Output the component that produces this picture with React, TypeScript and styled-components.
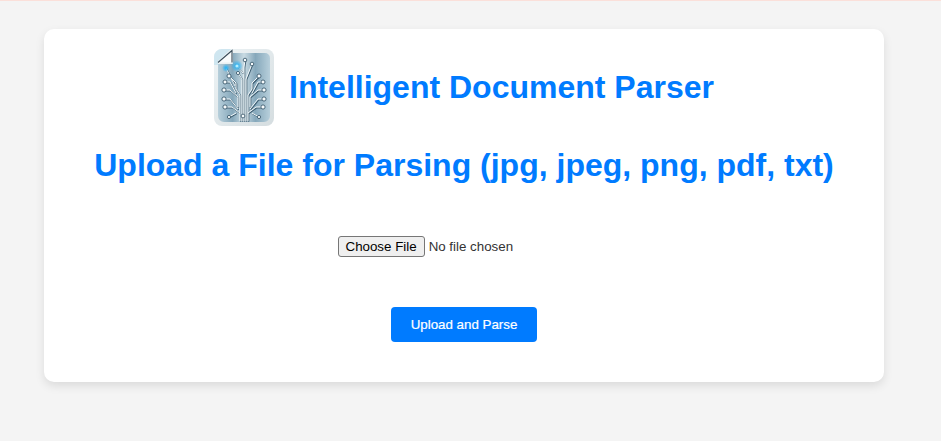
import React from "react";
import styled, { createGlobalStyle } from "styled-components";

const Global = createGlobalStyle`
  html, body { margin: 0; padding: 0; background: #f4f4f4; }
  body { font-family: "Liberation Sans", Arial, sans-serif; }
`;

const Page = styled.div`
  width: 941px;
  height: 441px;
  box-sizing: border-box;
  overflow: hidden;
  border-top: 1px solid #fbe0da;
  padding: 28px 57px 0 44px;
`;

const Card = styled.main`
  width: 840px;
  height: 353px;
  box-sizing: border-box;
  padding-top: 20px;
  background: #fff;
  border-radius: 10px;
  box-shadow: 0 4px 10px rgba(0, 0, 0, 0.1);
  text-align: center;
`;

const Header = styled.header`
  display: flex;
  justify-content: center;
  align-items: center;
  gap: 15px;
  height: 77px;
`;

const Title = styled.h1`
  margin: 0;
  font-size: 32px;
  font-weight: 700;
  line-height: 37px;
  color: #007bff;
`;

const Subtitle = styled.h2`
  margin: 21px 0 0;
  font-size: 32px;
  font-weight: 700;
  line-height: 37px;
  color: #007bff;
`;

const Form = styled.form`
  display: flex;
  flex-direction: column;
  align-items: center;
  margin-top: 52px;
`;

const FileInput = styled.input`
  width: 253px;
  height: 21px;
  font-family: "Liberation Sans", Arial, sans-serif;
  font-size: 13.333px;
  color: #333;

  &::file-selector-button {
    font-family: "Liberation Sans", Arial, sans-serif;
    font-size: 13.333px;
    color: #000;
    background: #efefef;
    border: 1px solid #767676;
    border-radius: 3px;
    padding: 1px 7px;
    margin-right: 4px;
    height: 21px;
  }
`;

const Submit = styled.button`
  margin-top: 50px;
  width: 146px;
  height: 35px;
  padding: 0;
  border: 0;
  border-radius: 4px;
  background: #007bff;
  color: #fff;
  font-family: "Liberation Sans", Arial, sans-serif;
  font-size: 13.333px;
  font-weight: 400;
  -webkit-text-stroke: 0.2px #fff;
`;

const traces = [
  "M26 72V46L22 40V34L15 27",
  "M34 72V46L38 40V34L45 27",
  "M28 72V30L24 24",
  "M30 72V18L31 11",
  "M32 72V30L38 15",
  "M24 58V48L16 41H10",
  "M36 58V48L44 41H50",
  "M22 44L16 33H11",
  "M38 44L44 33H49",
  "M24 60L16 50H10",
  "M36 60L44 50H50",
  "M26 64L18 58H11",
  "M34 64L42 58H49",
  "M29 24L23 17",
  "M21 37L12 19",
  "M22 64L15 68",
  "M38 64L45 68",
];

const nodes: [number, number, number][] = [
  [31, 11, 1.8], [38, 15, 1.8], [15, 27, 2], [45, 27, 2], [11, 33, 2], [49, 33, 2],
  [10, 41, 2.1], [50, 41, 2.1], [10, 50, 2.1], [50, 50, 2.1], [11, 58, 2.1], [49, 58, 2.1],
  [29, 67, 1.9], [15, 68, 1.6], [45, 68, 1.6], [24, 24, 1.6],
];

const Logo = () => (
  <svg width="60" height="77" viewBox="0 0 60 77" aria-label="Intelligent Document Parser logo">
    <defs>
      <linearGradient id="sheet" x1="0" y1="0" x2="1" y2="1">
        <stop offset="0" stopColor="#eef4f6" />
        <stop offset="1" stopColor="#d5dde0" />
      </linearGradient>
      <linearGradient id="inner" x1="0" y1="0" x2="1" y2="0">
        <stop offset="0" stopColor="#b7cfdb" />
        <stop offset="0.28" stopColor="#86a8bb" />
        <stop offset="0.5" stopColor="#c9dbe3" />
        <stop offset="0.72" stopColor="#86a8bb" />
        <stop offset="1" stopColor="#b7cfdb" />
      </linearGradient>
      <radialGradient id="glow">
        <stop offset="0" stopColor="#19b2fb" />
        <stop offset="1" stopColor="#19b2fb" stopOpacity="0" />
      </radialGradient>
      <filter id="soft" x="-10%" y="-10%" width="120%" height="120%">
        <feGaussianBlur stdDeviation="0.4" />
      </filter>
    </defs>
    <path d="M8 0H52a8 8 0 0 1 8 8V69a8 8 0 0 1-8 8H8a8 8 0 0 1-8-8V8a8 8 0 0 1 8-8Z" fill="url(#sheet)" />
    <g filter="url(#soft)">
      <path d="M19 4H51a5 5 0 0 1 5 5V67a6 6 0 0 1-6 6H10a6 6 0 0 1-6-6V15H19Z" fill="url(#inner)" />
      <path d="M0 8a8 8 0 0 1 8-8H17L4 12V16H0Z" fill="#cfe6f0" />
      <path d="M4 13.5L18 1.5V13.5Z" fill="#f8fbfc" />
      <path d="M4 13.5L18 1.5V13.5" fill="none" stroke="#3a4d5a" strokeWidth="1.1" />
      <g fill="none" stroke="#355468" strokeWidth="1.3" opacity="0.85" transform="translate(0.7 0.8)">
        {traces.map((d) => <path key={d} d={d} />)}
      </g>
      <g fill="none" stroke="#f2f8fa" strokeWidth="1">
        {traces.map((d) => <path key={d} d={d} />)}
      </g>
      {nodes.map(([cx, cy, r]) => (
        <circle key={`${cx}-${cy}`} cx={cx} cy={cy} r={r} fill="#f7fbfc" stroke="#2f4e62" strokeWidth="0.8" />
      ))}
      <circle cx="23" cy="17" r="6" fill="url(#glow)" />
      <circle cx="23" cy="17" r="1.6" fill="#b6efff" />
      <circle cx="12" cy="19" r="4" fill="url(#glow)" />
    </g>
  </svg>
);

export default function App() {
  return (
    <>
      <Global />
      <Page>
        <Card>
          <Header>
            <Logo />
            <Title>Intelligent Document Parser</Title>
          </Header>
          <Subtitle>Upload a File for Parsing (jpg, jpeg, png, pdf, txt)</Subtitle>
          <Form onSubmit={(e) => e.preventDefault()}>
            <FileInput type="file" accept=".jpg,.jpeg,.png,.pdf,.txt" />
            <Submit type="submit">Upload and Parse</Submit>
          </Form>
        </Card>
      </Page>
    </>
  );
}
